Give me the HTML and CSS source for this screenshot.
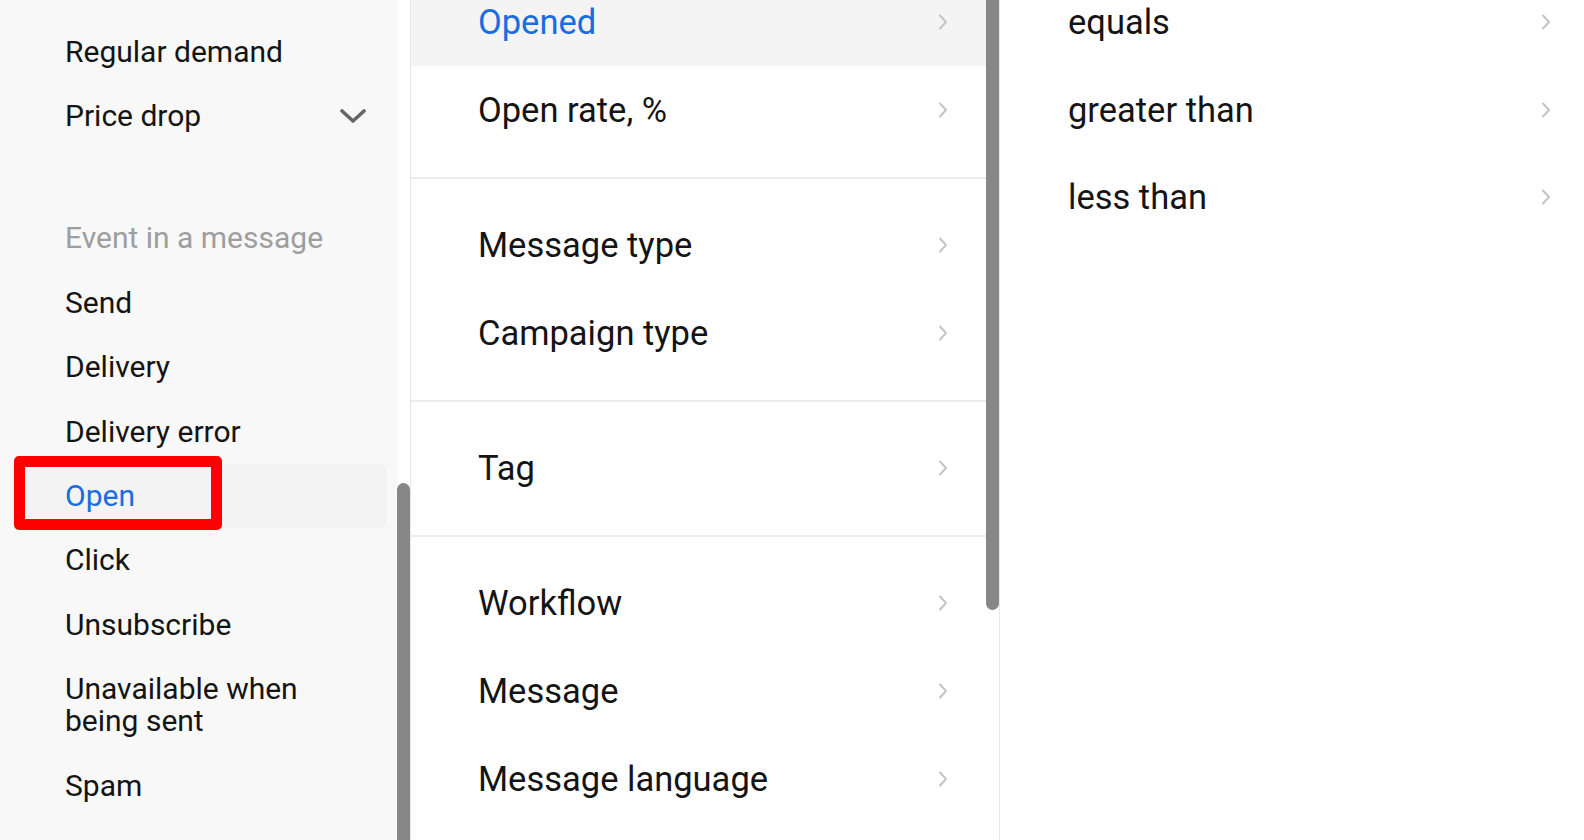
FILE: index.html
```html
<!DOCTYPE html>
<html lang="en">
<head>
<meta charset="utf-8">
<title>Filter menu</title>
<link rel="stylesheet" href="styles.css">
</head>
<body>
<div class="app">
  <aside class="col col-left">
    <div class="col-body left-body">
      <ul class="list">
        <li class="item">Regular demand</li>
        <li class="item item-expand">Price drop
          <svg class="chev-down" viewBox="0 0 26 14" width="26" height="14"><polyline points="2,2 13,12 24,2" fill="none" stroke="#666" stroke-width="3.6" stroke-linecap="round" stroke-linejoin="round"/></svg>
        </li>
      </ul>
      <div class="section">
        <div class="section-title">Event in a message</div>
        <ul class="list">
          <li class="item">Send</li>
          <li class="item">Delivery</li>
          <li class="item">Delivery error</li>
          <li class="item item-active">Open<span class="mark"></span></li>
          <li class="item">Click</li>
          <li class="item">Unsubscribe</li>
          <li class="item">Unavailable when<br>being sent</li>
          <li class="item">Spam</li>
        </ul>
      </div>
    </div>
    <div class="track"><div class="thumb thumb-left"></div></div>
  </aside>

  <section class="col col-mid">
    <div class="col-body mid-body">
      <div class="group">
        <div class="row row-active"><span>Opened</span><svg class="chev" viewBox="0 0 10 16" width="10" height="16"><polyline points="2,1.5 8,8 2,14.5"/></svg></div>
        <div class="row"><span>Open rate, %</span><svg class="chev" viewBox="0 0 10 16" width="10" height="16"><polyline points="2,1.5 8,8 2,14.5"/></svg></div>
      </div>
      <div class="group">
        <div class="row"><span>Message type</span><svg class="chev" viewBox="0 0 10 16" width="10" height="16"><polyline points="2,1.5 8,8 2,14.5"/></svg></div>
        <div class="row"><span>Campaign type</span><svg class="chev" viewBox="0 0 10 16" width="10" height="16"><polyline points="2,1.5 8,8 2,14.5"/></svg></div>
      </div>
      <div class="group">
        <div class="row"><span>Tag</span><svg class="chev" viewBox="0 0 10 16" width="10" height="16"><polyline points="2,1.5 8,8 2,14.5"/></svg></div>
      </div>
      <div class="group">
        <div class="row"><span>Workflow</span><svg class="chev" viewBox="0 0 10 16" width="10" height="16"><polyline points="2,1.5 8,8 2,14.5"/></svg></div>
        <div class="row"><span>Message</span><svg class="chev" viewBox="0 0 10 16" width="10" height="16"><polyline points="2,1.5 8,8 2,14.5"/></svg></div>
        <div class="row"><span>Message language</span><svg class="chev" viewBox="0 0 10 16" width="10" height="16"><polyline points="2,1.5 8,8 2,14.5"/></svg></div>
      </div>
    </div>
    <div class="track"><div class="thumb thumb-mid"></div></div>
  </section>

  <section class="col col-right">
    <div class="col-body right-body">
      <div class="row"><span>equals</span><svg class="chev" viewBox="0 0 10 16" width="10" height="16"><polyline points="2,1.5 8,8 2,14.5"/></svg></div>
      <div class="row"><span>greater than</span><svg class="chev" viewBox="0 0 10 16" width="10" height="16"><polyline points="2,1.5 8,8 2,14.5"/></svg></div>
      <div class="row"><span>less than</span><svg class="chev" viewBox="0 0 10 16" width="10" height="16"><polyline points="2,1.5 8,8 2,14.5"/></svg></div>
    </div>
  </section>
</div>
</body>
</html>
```

FILE: styles.css
```css
* { box-sizing: border-box; }

html, body {
  margin: 0;
  padding: 0;
  height: 840px;
  overflow: hidden;
  background: #ffffff;
}

body {
  font-family: Roboto, "Liberation Sans", Arial, sans-serif;
  font-size: 30px;
  color: #141414;
}

.app {
  display: flex;
  height: 840px;
  overflow: hidden;
}

.col {
  display: flex;
  height: 840px;
  overflow: hidden;
}

.col-body {
  flex: 1;
  min-width: 0;
}

/* ---------- left column ---------- */
.col-left {
  width: 411px;
  border-right: 1px solid #e6e6e6;
}

.left-body {
  background: #f8f8f8;
  padding-top: 19.5px;
}

.list {
  list-style: none;
  margin: 0;
  padding: 0;
}

.item {
  position: relative;
  display: flex;
  align-items: center;
  justify-content: space-between;
  padding: 16.2px 31px 16.2px 65px;
  line-height: 32px;
}

.item-expand .chev-down {
  display: block;
}

.section {
  margin-top: 57.5px;
}

.section-title {
  padding: 16.5px 31px 16.5px 65px;
  line-height: 32px;
  color: #9e9e9e;
}

.item-active {
  color: #1a6de0;
  background: #f3f3f3;
  margin-left: 14px;
  margin-right: 10px;
  padding-left: 51px;
  border-radius: 8px;
}

.mark {
  position: absolute;
  left: 0;
  top: -8px;
  width: 208px;
  height: 74px;
  border: 11px solid #ff0000;
  border-radius: 5px;
}

.track {
  width: 13px;
  flex: none;
  background: #ffffff;
}

.thumb {
  width: 13px;
  background: #878787;
  border-radius: 7px;
}

.thumb-left {
  margin-top: 483px;
  height: 370px;
}

.thumb-mid {
  margin-top: -12px;
  height: 622px;
}

/* ---------- middle column ---------- */
.col-mid {
  width: 589px;
  border-right: 1px solid #e8e8e8;
  font-size: 34.5px;
}

.mid-body {
  margin-top: -44px;
}

.group {
  padding: 22px 0 23px;
  border-bottom: 2px solid #ececec;
}

.row {
  display: flex;
  align-items: center;
  justify-content: space-between;
  height: 88px;
  line-height: 36px;
  padding: 0 38px 0 67px;
}

.row-active {
  background: #f4f4f4;
  color: #1a6de0;
}

.chev {
  display: block;
  flex: none;
}

.chev polyline {
  fill: none;
  stroke: #c4c4c4;
  stroke-width: 2;
  stroke-linecap: round;
  stroke-linejoin: round;
}

/* ---------- right column ---------- */
.col-right {
  flex: 1;
  font-size: 34.5px;
}

.right-body {
  margin-top: -21.5px;
}

.right-body .row {
  height: 87.5px;
  padding: 0 33px 0 68px;
}
```
